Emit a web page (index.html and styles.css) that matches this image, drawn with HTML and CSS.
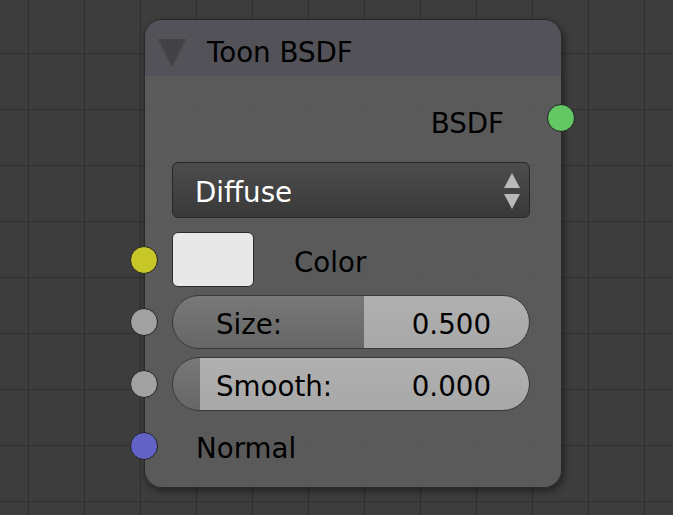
FILE: index.html
```html
<!DOCTYPE html>
<html lang="en">
<head>
  <meta charset="UTF-8" />
  <meta name="viewport" content="width=device-width, initial-scale=1.0" />
  <title>Toon BSDF</title>
  <link rel="stylesheet" href="styles.css">
</head>
<body>
  <div class="node">
    <div class="node-header">
      <span class="collapse"></span>
      <span class="node-title">Toon BSDF</span>
    </div>

    <div class="node-body">
      <div class="row output-row">
        <span class="label">BSDF</span>
        <span class="socket socket-out socket-shader"></span>
      </div>

      <div class="dropdown">
        <span class="label">Diffuse</span>
        <svg class="updown" width="16" height="37" viewBox="0 0 16 37">
          <polygon points="8,0 16,15 0,15" fill="#b9b9b9" />
          <polygon points="0,21 16,21 8,36" fill="#b9b9b9" />
        </svg>
      </div>

      <div class="row color-row">
        <span class="socket socket-color"></span>
        <div class="swatch"></div>
        <span class="label">Color</span>
      </div>

      <div class="row slider-row">
        <span class="socket socket-value"></span>
        <div class="slider" style="--fill: 191px">
          <span class="label">Size:</span>
          <span class="label">0.500</span>
        </div>
      </div>

      <div class="row slider-row">
        <span class="socket socket-value"></span>
        <div class="slider" style="--fill: 27px">
          <span class="label">Smooth:</span>
          <span class="label">0.000</span>
        </div>
      </div>

      <div class="row normal-row">
        <span class="socket socket-vector"></span>
        <span class="label">Normal</span>
      </div>
    </div>
  </div>
</body>
</html>
```

FILE: styles.css
```css
body {
  margin: 0;
  width: 673px;
  height: 515px;
  overflow: hidden;
  font-family: 'DejaVu Sans', sans-serif;
  font-size: 27.7px;
  color: #000;
  background-color: #3d3d3d;
  background-image:
    linear-gradient(to right, #303030 1px, transparent 1px),
    linear-gradient(to bottom, #303030 1px, transparent 1px);
  background-size: 56px 56px;
  background-position: 28px -3px;
}

.node {
  box-sizing: border-box;
  width: 418px;
  height: 469px;
  margin: 19px 0 0 144px;
  border: 1px solid #2a2a2a;
  border-radius: 18px;
  box-shadow: 2px 3px 7px rgba(0, 0, 0, 0.45);
  display: flex;
  flex-direction: column;
}

.node-header {
  height: 56px;
  box-sizing: border-box;
  padding: 9px 0 0 13px;
  display: flex;
  align-items: center;
  gap: 21px;
  background: rgba(88, 88, 96, 0.77);
  border-radius: 17px 17px 0 0;
}

.collapse {
  width: 0;
  height: 0;
  margin-top: 1px;
  border-left: 14px solid transparent;
  border-right: 14px solid transparent;
  border-top: 28px solid #434246;
}

.label {
  line-height: 1;
  padding-top: 6px;
  white-space: nowrap;
}

.node-body {
  flex: 1;
  padding: 18px 31px 0 27px;
  background: rgba(99, 99, 99, 0.77);
  border-radius: 0 0 17px 17px;
}

.row {
  position: relative;
  height: 54px;
  display: flex;
  align-items: center;
}

.output-row {
  justify-content: flex-end;
  padding-right: 26px;
}

.socket {
  position: absolute;
  left: -42px;
  top: calc(50% - 14px);
  box-sizing: border-box;
  width: 28px;
  height: 28px;
  border-radius: 50%;
  border: 1px solid #222;
}

.socket-out {
  left: auto;
  right: -45px;
  top: calc(50% - 17px);
}

.socket-shader { background: #63c763; }
.socket-color { background: #c7c729; }
.socket-value { background: #a1a1a1; }
.socket-vector { background: #6363c7; }

.dropdown {
  box-sizing: border-box;
  height: 56px;
  margin-top: 14px;
  padding: 0 9px 0 22px;
  display: flex;
  align-items: center;
  justify-content: space-between;
  color: #fff;
  border: 1px solid #262626;
  border-radius: 6px;
  background: linear-gradient(to bottom, #4c4c4c, #393939);
}

.updown {
  margin-top: 2px;
}

.color-row {
  height: 55px;
  margin-top: 14px;
}

.swatch {
  box-sizing: border-box;
  width: 82px;
  height: 55px;
  margin-right: 40px;
  background: #e8e8e8;
  border: 1px solid #2b2b2b;
  border-radius: 6px;
}

.slider-row {
  margin-top: 8px;
}

.slider {
  box-sizing: border-box;
  width: 100%;
  height: 54px;
  padding: 0 38px 0 43px;
  display: flex;
  align-items: center;
  justify-content: space-between;
  border: 1px solid #383838;
  border-radius: 27px;
  background-image:
    linear-gradient(to bottom, #787878, #666666),
    linear-gradient(to bottom, #b0b0b0, #a8a8a8);
  background-size: var(--fill) 100%, 100% 100%;
  background-repeat: no-repeat;
}

.normal-row {
  margin-top: 8px;
  padding-left: 24px;
}
```
